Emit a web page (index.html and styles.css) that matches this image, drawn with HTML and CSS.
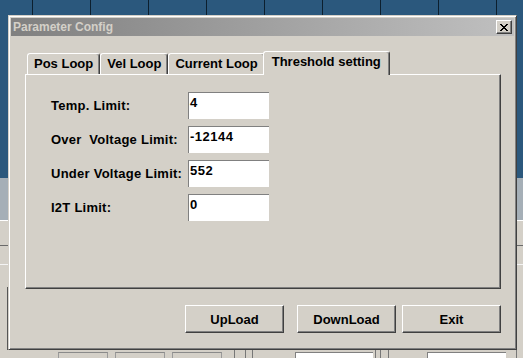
FILE: index.html
```html
<!DOCTYPE html>
<html lang="en">
<head>
	<meta charset="UTF-8">
	<title>Parameter Config</title>
	<link rel="stylesheet" href="styles.css">
</head>
<body>
	<div class="app">
		<div class="grid-head">
			<span></span><span></span><span></span><span></span>
			<span></span><span></span><span></span><span></span><span class="last"></span>
		</div>
		<div class="band"></div>
		<div class="work">
			<div class="bar"></div>
			<div class="bar2"></div>
			<div class="pane"></div>
			<div class="tool-row">
				<span class="tcell first"></span>
				<span class="tcell"></span>
				<span class="tcell"></span>
				<span class="tline l12"></span>
				<span class="tline l10"></span>
				<span class="tline l6"></span>
				<span class="tfield f1"></span>
				<span class="tline l2"></span>
				<span class="tline l4"></span>
				<span class="tline l7"></span>
				<span class="tfield f2"></span>
				<span class="tline l10"></span>
			</div>
		</div>
	</div>

	<div class="dialog">
		<div class="caption">
			<span>Parameter Config</span>
			<span class="close">
				<svg width="8" height="7" viewBox="0 0 8 7"><path fill="#000" d="M0 0h2v1H0z M6 0h2v1H6z M1 1h2v1H1z M5 1h2v1H5z M2 2h4v1H2z M3 3h2v1H3z M2 4h4v1H2z M1 5h2v1H1z M5 5h2v1H5z M0 6h2v1H0z M6 6h2v1H6z"/></svg>
			</span>
		</div>
		<div class="dlg-body">
			<div class="tabs">
				<span class="tab">Pos Loop</span>
				<span class="tab">Vel Loop</span>
				<span class="tab">Current Loop</span>
				<span class="tab active">Threshold setting</span>
			</div>
			<div class="panel">
				<div class="field">
					<label>Temp. Limit:</label>
					<div class="edit">4</div>
				</div>
				<div class="field">
					<label>Over&nbsp; Voltage Limit:</label>
					<div class="edit">-12144</div>
				</div>
				<div class="field">
					<label>Under Voltage Limit:</label>
					<div class="edit">552</div>
				</div>
				<div class="field">
					<label>I2T Limit:</label>
					<div class="edit">0</div>
				</div>
			</div>
			<div class="buttons">
				<button class="upload">UpLoad</button>
				<button>DownLoad</button>
				<button>Exit</button>
			</div>
		</div>
	</div>
</body>
</html>
```

FILE: styles.css
```css
*{margin:0;padding:0;box-sizing:border-box;}
body{
	position:relative;
	width:523px;
	height:358px;
	overflow:hidden;
	background:#d4d0c8;
	font-family:"Liberation Sans",Arial,sans-serif;
	color:#000;
}
/* background application */
.app{
	width:523px;
	height:358px;
	display:flex;
	flex-direction:column;
	overflow:hidden;
}
.grid-head{
	flex:none;
	height:178px;
	display:flex;
	padding-left:32px;
	background:#2b587d;
	overflow:hidden;
}
.grid-head span{
	flex:none;
	width:58px;
	border-left:1px solid #0c1f2e;
}
.grid-head .last{width:27px;}
.band{
	flex:none;
	height:42px;
	background:#a5afb7;
}
.work{
	flex:1;
	display:flex;
	flex-direction:column;
	border-top:1px solid #fff;
}
.work .bar{
	height:25px;
	border-bottom:1px solid #6a6a6a;
}
.work .bar2{
	height:19px;
	border-bottom:1px solid #f4f4f4;
}
.work .pane{
	flex:1;
	width:8px;
	margin-top:22px;
	border-right:1px solid #555;
}
.tool-row{
	flex:none;
	height:8px;
	display:flex;
	align-items:flex-start;
	padding-top:2px;
	overflow:hidden;
}
.tcell{
	flex:none;
	width:50px;
	height:20px;
	margin-left:7px;
	border-top:1px solid #8a8a8a;
	border-left:1px solid #9a9a9a;
	border-right:1px solid #9a9a9a;
}
.tcell.first{margin-left:58px;}
.tline{
	flex:none;
	width:1px;
	height:20px;
	margin-top:-2px;
	background:#777;
}
.l2{margin-left:2px;}
.l4{margin-left:4px;}
.l6{margin-left:6px;}
.l7{margin-left:7px;}
.l10{margin-left:10px;}
.l12{margin-left:12px;}
.tfield{
	flex:none;
	height:20px;
	background:#fff;
	border-top:1px solid #808080;
	border-left:1px solid #808080;
}
.f1{width:78px;margin-left:42px;}
.f2{width:79px;margin-left:38px;}

/* dialog window */
.dialog{
	position:absolute;
	left:8px;
	top:15px;
	width:509px;
	height:335px;
	display:flex;
	flex-direction:column;
	padding:2px;
	background:#d4d0c8;
	border:1px solid;
	border-color:#d4d0c8 #404040 #404040 #d4d0c8;
	box-shadow:inset 1px 1px #fff,inset -1px -1px #808080;
}
.caption{
	flex:none;
	height:18px;
	display:flex;
	align-items:center;
	justify-content:space-between;
	padding:0 2px;
	background:linear-gradient(to right,#808080,#c0c0c0);
	color:#d4d0c8;
	font-size:12px;
	font-weight:bold;
}
.close{
	width:16px;
	height:14px;
	display:flex;
	align-items:center;
	justify-content:center;
	background:#d4d0c8;
	border:1px solid;
	border-color:#fff #404040 #404040 #fff;
	box-shadow:inset -1px -1px #808080;
}
.close svg{display:block;}
.dlg-body{
	flex:1;
	display:flex;
	flex-direction:column;
	padding:15px 13px 0 14px;
}
.tabs{
	display:flex;
	align-items:flex-end;
	height:23px;
	padding-left:2px;
}
.tab{
	height:21px;
	padding:0 6px;
	border:1px solid;
	border-bottom:none;
	border-color:#fff #404040 transparent #fff;
	border-radius:3px 3px 0 0;
	box-shadow:inset -1px 0 #808080;
	background:#d4d0c8;
	font-size:13px;
	font-weight:bold;
	line-height:19px;
	white-space:nowrap;
}
.tab.active{
	position:relative;
	z-index:1;
	height:24px;
	margin:0 -2px -1px;
	padding:0 8px;
}
.panel{
	height:215px;
	padding:17px 0 0 25px;
	border:1px solid;
	border-color:#fff #404040 #404040 #fff;
	box-shadow:inset -1px -1px #808080;
}
.field{
	display:flex;
	align-items:center;
	height:27px;
	margin-bottom:7px;
}
.field label{
	width:137px;
	font-size:13px;
	font-weight:bold;
	letter-spacing:.25px;
	white-space:nowrap;
}
.edit{
	width:81px;
	height:27px;
	padding:2px 0 0 1px;
	background:#fff;
	border-top:1px solid #808080;
	border-left:1px solid #808080;
	font-size:13px;
	font-weight:bold;
	line-height:15px;
	letter-spacing:.5px;
}
.buttons{
	display:flex;
	justify-content:flex-end;
	gap:6px;
	margin-top:16px;
}
.buttons button{
	width:99px;
	height:28px;
	background:#d4d0c8;
	border:1px solid;
	border-color:#fff #404040 #404040 #fff;
	box-shadow:inset -1px -1px #808080;
	font-family:inherit;
	font-size:13px;
	font-weight:bold;
	color:#000;
}
.buttons .upload{margin-right:7px;}
```
